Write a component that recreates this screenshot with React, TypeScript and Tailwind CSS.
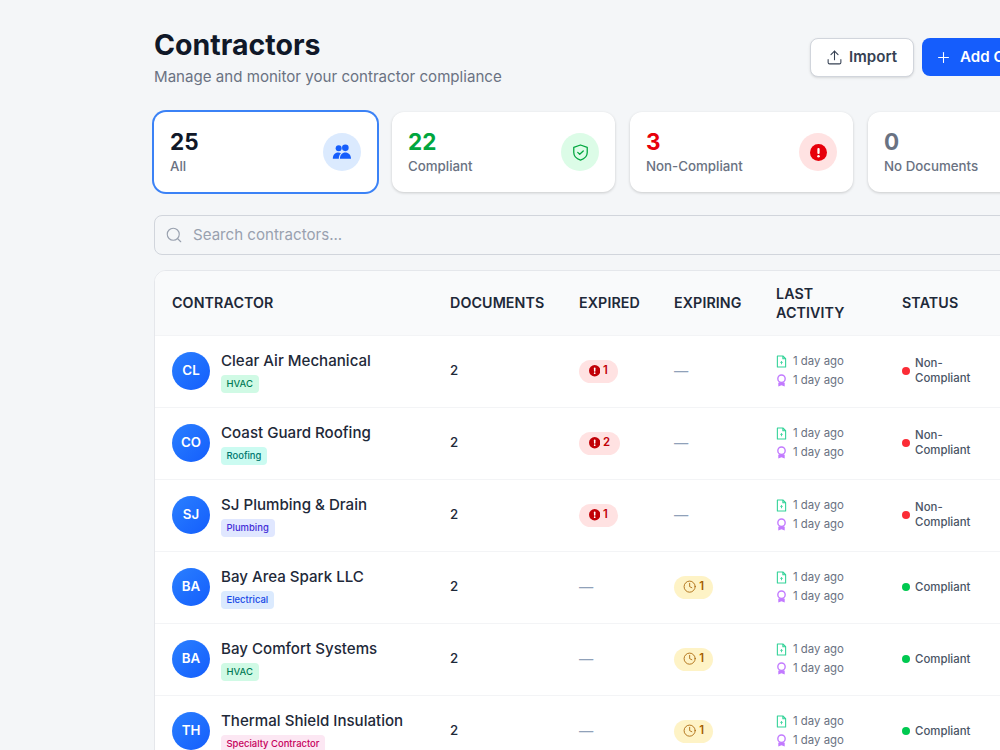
import React from "react";
import { Upload, Plus, Search, Users, Clock } from "lucide-react";

const AlertFilled = ({ className }: { className: string }) => (
  <svg viewBox="0 0 24 24" className={className}>
    <circle cx="12" cy="12" r="12" fill="currentColor" />
    <rect x="10.4" y="5.5" width="3.2" height="8.5" rx="1.4" fill="#fff" />
    <circle cx="12" cy="17.2" r="1.8" fill="#fff" />
  </svg>
);

const PeopleFilled = ({ className }: { className: string }) => (
  <svg viewBox="0 0 24 24" className={className} fill="currentColor">
    <circle cx="8" cy="7.5" r="3.6" />
    <circle cx="16" cy="7" r="4" />
    <path d="M1 20c0-4.500 2.500-7.500 6.500-7.500 1.300 0 2.400.3 3.300.9C9 15 8.200 17.300 8.200 20H1z" />
    <path d="M9.500 20c0-4.600 2.700-7.500 6.500-7.500s6.800 2.900 6.800 7.500H9.500z" />
  </svg>
);

const ShieldIcon = ({ className }: { className: string }) => (
  <svg viewBox="0 0 24 24" className={className} fill="none" stroke="currentColor" strokeWidth={1.6} strokeLinejoin="round" strokeLinecap="round">
    <path d="M12 2.500 20.500 5.500v6.500c0 5-3.700 8-8.500 9.500-4.800-1.500-8.500-4.500-8.500-9.500V5.500z" />
    <path d="M8.500 11.800l2.500 2.400 4.500-4.200" />
  </svg>
);

const FileIcon = ({ className }: { className: string }) => (
  <svg viewBox="0 0 12 14" className={className} fill="none" stroke="currentColor" strokeWidth={1.2} strokeLinejoin="round">
    <path d="M1.500 1h6l3 3v9h-9z" />
    <path d="M7.500 1v3h3" />
    <path d="M6 10V7M4.700 8.200 6 7l1.300 1.200" strokeWidth={1} />
  </svg>
);

const AwardIcon = ({ className }: { className: string }) => (
  <svg viewBox="0 0 12 14" className={className}>
    <circle cx="6" cy="5" r="4" fill="none" stroke="currentColor" strokeWidth={1.5} />
    <path d="M2.500 9.500 3.500 8.800h5l1 .7V13.500L6 12.300 2.500 13.500z" fill="currentColor" />
  </svg>
);

type Row = { i: string; name: string; tag: string; tagC: string; expired?: number; expiring?: number; ok: boolean };
const rows: Row[] = [
  { i: "CL", name: "Clear Air Mechanical", tag: "HVAC", tagC: "bg-[#d0fae5] text-[#007a55]", expired: 1, ok: false },
  { i: "CO", name: "Coast Guard Roofing", tag: "Roofing", tagC: "bg-[#cbfbf1] text-[#00786f]", expired: 2, ok: false },
  { i: "SJ", name: "SJ Plumbing & Drain", tag: "Plumbing", tagC: "bg-[#e0e7ff] text-[#432dd7]", expired: 1, ok: false },
  { i: "BA", name: "Bay Area Spark LLC", tag: "Electrical", tagC: "bg-[#dbeafe] text-[#1447e6]", expiring: 1, ok: true },
  { i: "BA", name: "Bay Comfort Systems", tag: "HVAC", tagC: "bg-[#d0fae5] text-[#007a55]", expiring: 1, ok: true },
  { i: "TH", name: "Thermal Shield Insulation", tag: "Specialty Contractor", tagC: "bg-[#fce7f3] text-[#c6005c]", expiring: 1, ok: true },
];

const Stat = ({ n, label, nc, ib, icon, active }: { n: string; label: string; nc: string; ib: string; icon: React.ReactNode; active?: boolean }) => (
  <div className={`w-[223px] h-[80px] shrink-0 rounded-xl bg-white flex items-center justify-between px-4 ${active ? "shadow-[0_0_0_2px_#3b82f6]" : "shadow-[0_1px_3px_rgba(0,0,0,0.18)]"}`}>
    <div className="pt-[1px]">
      <div className={`text-[22.5px] leading-[26px] font-bold ${nc}`}>{n}</div>
      <div className="text-[13.3px] leading-[20px] font-medium text-[#6a7282] mt-[1px]">{label}</div>
    </div>
    <div className={`w-[38px] h-[38px] rounded-full flex items-center justify-center ${ib}`}>{icon}</div>
  </div>
);

const Dash = () => <span className="text-[14.25px] text-[#90a1b9]">—</span>;

export default function App() {
  return (
    <div className="w-[1000px] h-[750px] overflow-hidden bg-[#f4f6f8] font-['Inter','Liberation_Sans',sans-serif]">
      <div className="w-[1100px] pl-[154px] pt-[28px]">
        <div className="flex justify-between items-start">
          <div>
            <h1 className="text-[28.5px] leading-[34px] font-bold text-[#101828]">Contractors</h1>
            <p className="text-[15.1px] leading-[22px] text-[#6a7282] mt-1">Manage and monitor your contractor compliance</p>
          </div>
          <div className="flex gap-2 mt-[10px] w-[290px]">
            <button className="h-[39px] w-[104px] shrink-0 rounded-lg bg-white border border-[#d1d5dc] shadow-sm flex items-center justify-center gap-[6px] pr-[1px] text-[15.1px] font-semibold text-[#364153]">
              <Upload className="w-[17px] h-[17px]" strokeWidth={1.5} />Import
            </button>
            <button className="h-[38px] flex-1 rounded-lg bg-[#155dfc] flex items-center gap-2 pl-[13px] text-[15.1px] font-semibold text-white whitespace-nowrap">
              <Plus className="w-[17px] h-[17px]" strokeWidth={1.5} />Add Contractor
            </button>
          </div>
        </div>

        <div className="flex gap-[15px] mt-[24px] items-center">
          <Stat active n="25" label="All" nc="text-[#101828]" ib="bg-[#dbeafe]" icon={<PeopleFilled className="w-[20px] h-[20px] text-[#155dfc]" />} />
          <Stat n="22" label="Compliant" nc="text-[#00a63e]" ib="bg-[#dcfce7]" icon={<ShieldIcon className="w-[19px] h-[19px] text-[#00a63e]" />} />
          <Stat n="3" label="Non-Compliant" nc="text-[#e7000b]" ib="bg-[#ffe2e2]" icon={<AlertFilled className="w-[17px] h-[17px] text-[#e7000b]" />} />
          <Stat n="0" label="No Documents" nc="text-[#6a7282]" ib="bg-[#f3f4f6]" icon={<Users className="w-4 h-4 text-[#6a7282]" />} />
        </div>

        <div className="mt-[23px] w-[900px] h-[40px] rounded-lg border border-[#d1d5dc] bg-[#f4f6f8] flex items-center pl-[10px] gap-[10px]">
          <Search className="w-[18px] h-[18px] text-[#99a1af]" strokeWidth={1.5} />
          <span className="text-[15.1px] text-[#99a1af]">Search contractors...</span>
        </div>

        <div className="mt-[15px] w-[900px] rounded-xl border border-[#e5e7eb] bg-white overflow-hidden">
          <table className="w-full table-fixed border-collapse text-left">
            <colgroup>
              <col className="w-[278px]" />
              <col className="w-[129px]" />
              <col className="w-[95px]" />
              <col className="w-[102px]" />
              <col className="w-[126px]" />
              <col />
            </colgroup>
            <thead className="bg-[#f9fafb]">
              <tr className="h-[64px] text-[14.25px] leading-[19px] text-[#1e2939] border-b border-[#f3f4f6]">
                {["CONTRACTOR", "DOCUMENTS", "EXPIRED", "EXPIRING", "LAST ACTIVITY", "STATUS"].map((h) => (
                  <th key={h} className="pl-[17px] pr-3 font-semibold tracking-[0.1px]">{h}</th>
                ))}
              </tr>
            </thead>
            <tbody>
              {rows.map((r, idx) => (
                <tr key={idx} className="h-[72px] border-b border-[#f3f4f6]">
                  <td className="pl-[17px]">
                    <div className="flex items-center gap-[11px]">
                      <div className="w-[38px] h-[38px] rounded-full bg-gradient-to-br from-[#2b7fff] to-[#155dfc] text-white text-[13.3px] font-semibold flex items-center justify-center">{r.i}</div>
                      <div className="flex flex-col items-start gap-[4px] mt-[2px]">
                        <div className="text-[15.1px] leading-[20px] font-medium text-[#1e2939] whitespace-nowrap">{r.name}</div>
                        <span className={`rounded-[4px] pl-[5.5px] pr-[6px] text-[9.45px] leading-[18px] font-medium ${r.tagC}`}>{r.tag}</span>
                      </div>
                    </div>
                  </td>
                  <td className="pl-[17px] text-[13.3px] font-medium text-[#1e2939]">2</td>
                  <td className="pl-[17px]">
                    <div className="flex items-center h-[23px]">
                      {r.expired ? (
                        <span className="inline-flex items-center gap-[3px] h-[23px] pl-[9.5px] pr-[10px] rounded-full bg-[#ffe2e2] text-[#c10007] text-[11.4px] font-semibold">
                          <AlertFilled className="w-[11.4px] h-[11.4px]" />{r.expired}
                        </span>
                      ) : <Dash />}
                    </div>
                  </td>
                  <td className="pl-[17px]">
                    <div className="flex items-center h-[23px]">
                      {r.expiring ? (
                        <span className="inline-flex items-center gap-[3px] h-[23px] px-[9px] rounded-full bg-[#fef3c6] text-[#a65f00] text-[11.4px] font-semibold">
                          <Clock className="w-[13.3px] h-[13.3px]" strokeWidth={1.5} />{r.expiring}
                        </span>
                      ) : <Dash />}
                    </div>
                  </td>
                  <td className="pl-[17px]">
                    <div className="flex items-center gap-[6px] text-[11.4px] leading-[19px] text-[#6a7282]">
                      <FileIcon className="w-[11px] h-[13px] text-[#34d399]" />1 day ago
                    </div>
                    <div className="flex items-center gap-[6px] text-[11.4px] leading-[19px] text-[#6a7282]">
                      <AwardIcon className="w-[11px] h-[13px] text-[#c27aff]" />1 day ago
                    </div>
                  </td>
                  <td className="pl-[17px]">
                    <div className="flex items-center gap-[5.5px] text-[11.4px] leading-[15px] font-medium text-[#4a5565]">
                      <span className={`w-[7.6px] h-[7.6px] rounded-full shrink-0 ${r.ok ? "bg-[#00c950]" : "bg-[#fb2c36]"}`} />
                      <span className="w-[60px]">{r.ok ? "Compliant" : "Non-Compliant"}</span>
                    </div>
                  </td>
                </tr>
              ))}
            </tbody>
          </table>
        </div>
      </div>
    </div>
  );
}
